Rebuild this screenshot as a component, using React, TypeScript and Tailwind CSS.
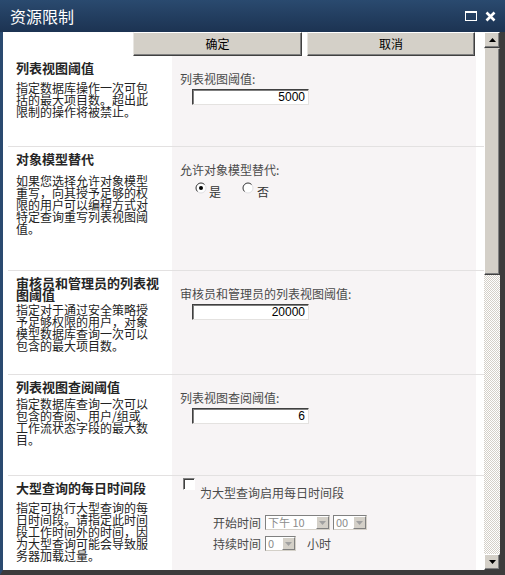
import React from 'react';

function TextInput({ value }: { value: string }) {
  return (
    <div className="ml-[12px] mt-[3px] flex h-[16px] w-[117px] items-center justify-end border border-t-[#404040] border-l-[#404040] border-r-[#e4e2e0] border-b-[#e4e2e0] bg-white pr-[3px] font-['Liberation_Sans',sans-serif] text-[12px] leading-none text-black shadow-[inset_1px_1px_#808080]">
      {value}
    </div>
  );
}

function Radio({ checked }: { checked?: boolean }) {
  return (
    <svg width="12" height="12" viewBox="0 0 12 12" className="shrink-0">
      <circle cx="6" cy="6" r="5" fill="#fff" stroke="#e0dfe3" />
      <path d="M2.46 9.54 A5 5 0 0 1 9.54 2.46" fill="none" stroke="#404040" />
      {checked && <circle cx="6" cy="6" r="2" fill="#000" />}
    </svg>
  );
}

function Select({ value, className }: { value: string; className: string }) {
  return (
    <div className={`flex h-[15px] items-stretch border border-t-[#808080] border-l-[#808080] border-r-[#d4d0c8] border-b-[#d4d0c8] bg-white ${className}`}>
      <span className="flex-1 pl-[2px] text-[11px] leading-[13px] text-[#8c8c8c]">{value}</span>
      <span className="flex w-[13px] items-center justify-center border border-t-[#fff] border-l-[#fff] border-r-[#808080] border-b-[#808080] bg-[#d4d0c8]">
        <svg width="7" height="4" viewBox="0 0 7 4">
          <path d="M0 0 H7 L3.5 4 Z" fill="#a0a0a0" />
        </svg>
      </span>
    </div>
  );
}

function Section({
  title,
  desc,
  height,
  descMt,
  border,
  children,
}: {
  title: string;
  desc: string;
  height: string;
  descMt: string;
  border?: boolean;
  children: React.ReactNode;
}) {
  return (
    <div className={`ml-[5px] flex shrink-0 ${height} ${border ? 'border-t border-[#e3e1e1]' : ''}`}>
      <div className="w-[164px] pl-[8px] pt-[6px]">
        <div className="w-[145px] text-[13px] font-bold leading-[12px] text-[#262626]">{title}</div>
        <div className={`${descMt} w-[134px] text-[12px] leading-[12px] text-[#222]`}>{desc}</div>
      </div>
      <div className="w-[304px] bg-[#f7f4f5] pl-[8px] pt-[16px] text-[12px] leading-[14px] text-[#4a4a4a]">
        {children}
      </div>
    </div>
  );
}

function Scrollbar() {
  return (
    <div className="flex w-[16px] flex-col">
      <div className="flex h-[16px] items-center justify-center border border-t-[#fff] border-l-[#fff] border-r-[#404040] border-b-[#404040] bg-[#d4d0c8] shadow-[inset_-1px_-1px_#808080]">
        <svg width="7" height="4" viewBox="0 0 7 4">
          <path d="M3.5 0 L7 4 H0 Z" fill="#000" />
        </svg>
      </div>
      <div className="h-[227px] border border-t-[#d4d0c8] border-l-[#fff] border-r-[#404040] border-b-[#404040] bg-[#d4d0c8] shadow-[inset_-1px_-1px_#808080]" />
      <div className="flex-1 bg-[repeating-conic-gradient(#d4d0c8_0%_25%,#ffffff_0%_50%)] bg-size-[2px_2px]" />
      <div className="flex h-[16px] items-center justify-center border border-t-[#fff] border-l-[#fff] border-r-[#404040] border-b-[#404040] bg-[#d4d0c8] shadow-[inset_-1px_-1px_#808080]">
        <svg width="7" height="4" viewBox="0 0 7 4">
          <path d="M0 0 H7 L3.5 4 Z" fill="#000" />
        </svg>
      </div>
    </div>
  );
}

export default function App() {
  return (
    <div className="flex h-[575px] w-[505px] flex-col overflow-hidden bg-[#1f3756] font-['Noto_Sans_CJK_SC',sans-serif]">
      {/* Title bar */}
      <div className="flex h-[32px] shrink-0 items-center justify-between bg-gradient-to-b from-[#2a4a6f] to-[#1c3352] pl-[10px] pr-[9px]">
        <span className="text-[16px] leading-none text-white">资源限制</span>
        <div className="flex items-center gap-[8px]">
          <svg width="12" height="10" viewBox="0 0 12 10">
            <rect x="0.5" y="0.5" width="11" height="9" fill="none" stroke="#fff" />
            <rect x="0" y="0" width="12" height="2" fill="#fff" />
          </svg>
          <svg width="11" height="11" viewBox="0 0 11 11">
            <path d="M1.5 1.5 L9.5 9.5 M9.5 1.5 L1.5 9.5" stroke="#fff" strokeWidth="2.6" />
          </svg>
        </div>
      </div>

      {/* Body */}
      <div className="flex min-h-0 flex-1 border-b-[5px] border-l-[3px] border-r-[5px] border-b-[#3c3c3c] border-l-[#2a4a70] border-r-[#3c3c3c]">
        <div className="flex min-w-0 flex-1 flex-col overflow-hidden bg-white">
          {/* Buttons */}
          <div className="flex h-[24px] shrink-0 text-[12px] text-black">
            <div className="w-[130px]" />
            <button className="w-[169px] border border-t-[#fff] border-l-[#e8e6e2] border-r-[#404040] border-b-[#404040] bg-[#d4d0c8] shadow-[inset_-1px_-1px_#808080]">
              确定
            </button>
            <div className="w-[5px]" />
            <button className="w-[168px] border border-t-[#fff] border-l-[#e8e6e2] border-r-[#404040] border-b-[#404040] bg-[#d4d0c8] shadow-[inset_-1px_-1px_#808080]">
              取消
            </button>
          </div>

          <Section
            title="列表视图阈值"
            desc="指定数据库操作一次可包括的最大项目数。超出此限制的操作将被禁止。"
            height="h-[90px]"
            descMt="mt-[8px]"
          >
            <div>列表视图阈值:</div>
            <TextInput value="5000" />
          </Section>

          <Section
            border
            title="对象模型替代"
            desc="如果您选择允许对象模型重写，向其授予足够的权限的用户可以编程方式对特定查询重写列表视图阈值。"
            height="h-[124px]"
            descMt="mt-[10px]"
          >
            <div>允许对象模型替代:</div>
            <div className="ml-[15px] mt-[5px] flex items-start text-[#333]">
              <Radio checked />
              <span className="ml-[2px] mt-[4px] leading-[12px]">是</span>
              <div className="ml-[21px]">
                <Radio />
              </div>
              <span className="ml-[3px] mt-[4px] leading-[12px]">否</span>
            </div>
          </Section>

          <Section
            border
            title="审核员和管理员的列表视图阈值"
            desc="指定对于通过安全策略授予足够权限的用户，对象模型数据库查询一次可以包含的最大项目数。"
            height="h-[104px]"
            descMt="mt-[3px]"
          >
            <div>审核员和管理员的列表视图阈值:</div>
            <TextInput value="20000" />
          </Section>

          <Section
            border
            title="列表视图查阅阈值"
            desc="指定数据库查询一次可以包含的查阅、用户/组或工作流状态字段的最大数目。"
            height="h-[101px]"
            descMt="mt-[5px]"
          >
            <div>列表视图查阅阈值:</div>
            <TextInput value="6" />
          </Section>

          <Section
            border
            title="大型查询的每日时间段"
            desc="指定可执行大型查询的每日时间段。请指定此时间段工作时间外的时间，因为大型查询可能会导致服务器加载过量。"
            height="flex-1"
            descMt="mt-[8px]"
          >
            <div className="-mt-[14px] ml-[3px]">
              <div className="flex items-start">
                <div className="h-[12px] w-[12px] border border-t-[#808080] border-l-[#808080] border-r-[#fff] border-b-[#fff] bg-white shadow-[inset_1px_1px_#404040]" />
                <span className="ml-[5px] mt-[8px]">为大型查询启用每日时间段</span>
              </div>
              <div className="ml-[30px] mt-[15px] flex items-center">
                <span>开始时间</span>
                <Select value="下午 10" className="ml-[4px] w-[65px]" />
                <Select value="00" className="ml-[3px] w-[34px]" />
              </div>
              <div className="ml-[30px] mt-[6px] flex items-center">
                <span>持续时间</span>
                <Select value="0" className="ml-[4px] w-[31px]" />
                <span className="ml-[11px]">小时</span>
              </div>
            </div>
          </Section>
        </div>
        <Scrollbar />
      </div>
    </div>
  );
}
